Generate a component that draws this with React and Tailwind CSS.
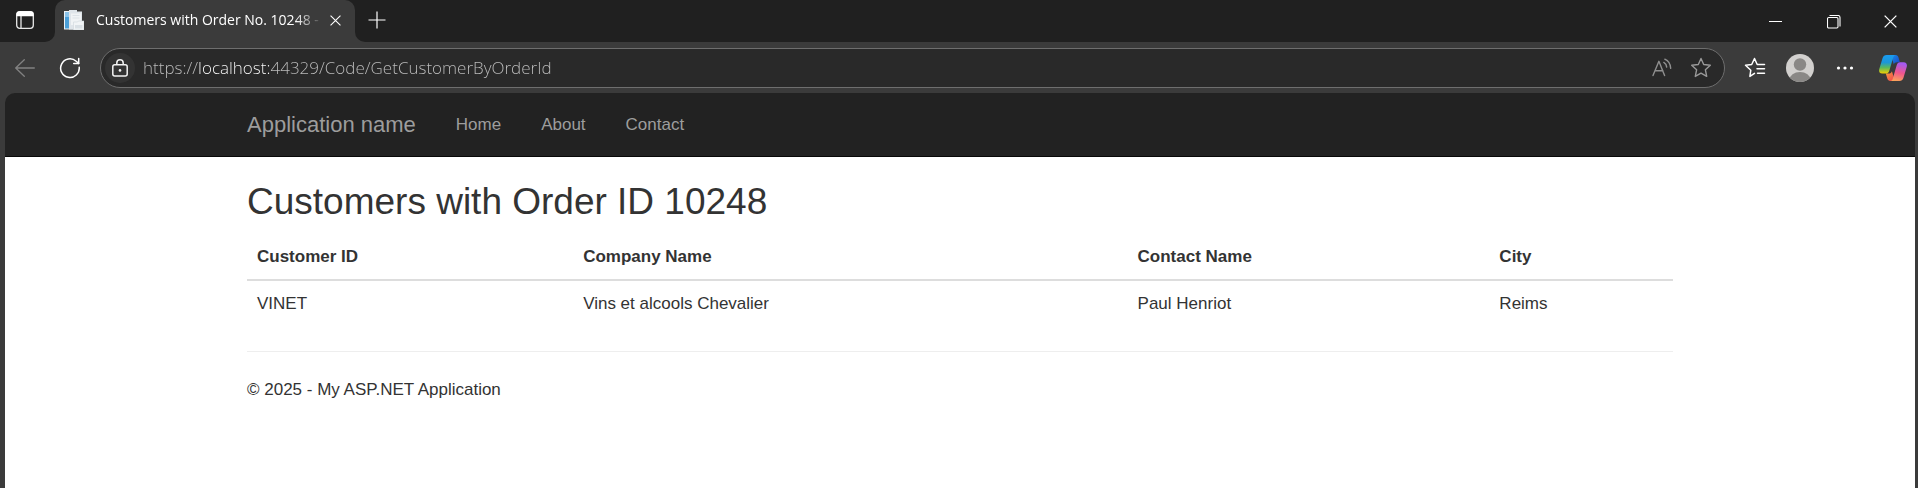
import React from "react";

const customers = [
  { id: "VINET", company: "Vins et alcools Chevalier", contact: "Paul Henriot", city: "Reims" },
];

function IconButton({ label, className, children }) {
  return (
    <button type="button" aria-label={label} className={`flex shrink-0 items-center justify-center ${className}`}>
      {children}
    </button>
  );
}

function TabActionsIcon() {
  return (
    <svg width="20" height="20" viewBox="0 0 20 20" fill="none" stroke="#e8e8e8" strokeWidth="1.3">
      <rect x="1.700" y="1.700" width="16.600" height="16.600" rx="3" />
      <path d="M2 5V4.5A2.5 2.5 0 0 1 4.5 2h11A2.5 2.5 0 0 1 18 4.500V5.500H2z" fill="#fff" stroke="#fff" />
      <path d="M6 6v12" />
    </svg>
  );
}

function Favicon() {
  return (
    <svg width="20" height="20" viewBox="0 0 20 20" className="shrink-0" aria-hidden="true">
      <rect x="0" y="1" width="12" height="18.500" fill="#eef2f5" />
      <rect x="1" y="2" width="4" height="16.500" fill="#4a9fd8" />
      <rect x="1" y="2" width="4" height="5" fill="#8cc4ea" />
      <path d="M5 0h8v1.500h5V19.500H5z" fill="#dfe5ea" />
      <path d="M7 3.500h10V15H7z" fill="#f0f3f5" />
      <path d="M8.500 5.500h7M8.500 8h7" stroke="#dde3e8" />
      <path d="M9.500 12h4l1-1H20v9H9.500z" fill="#f1f4f6" stroke="#cfd6dc" strokeWidth="0.6" />
      <path d="M11 15h7.500v3.500H11z" fill="#d9e0e5" />
    </svg>
  );
}

function CrossIcon({ size }) {
  return (
    <svg width={size} height={size} viewBox="0 0 14 14" fill="none" stroke="#fff" strokeWidth="1.4">
      <path d="M.7.7l12.600 12.600M13.300.7L.7 13.300" />
    </svg>
  );
}

function PlusIcon() {
  return (
    <svg width="18" height="18" viewBox="0 0 18 18" fill="none" stroke="#fff" strokeWidth="1.2">
      <path d="M9 .5v17M.5 9h17" />
    </svg>
  );
}

function MinimizeIcon() {
  return (
    <svg width="14" height="14" viewBox="0 0 14 14" fill="none" stroke="#fff">
      <path d="M0 6.500h13" />
    </svg>
  );
}

function RestoreIcon() {
  return (
    <svg width="14" height="14" viewBox="0 0 14 14" fill="none" stroke="#fff" strokeWidth="1.1">
      <rect x=".5" y="2.500" width="10.500" height="10.500" rx="1.2" />
      <path d="M2.500.5h8.500a2 2 0 0 1 2 2V11.500" />
    </svg>
  );
}

function BackIcon() {
  return (
    <svg width="20" height="18" viewBox="0 0 20 18" fill="none" stroke="#828282" strokeWidth="1.3" strokeLinecap="round" strokeLinejoin="round">
      <path d="M19.300 9H.7M9.300.7L.7 9l8.600 8.300" />
    </svg>
  );
}

function RefreshIcon() {
  return (
    <svg width="22" height="22" viewBox="0 0 22 22" fill="none" stroke="#fff" strokeWidth="1.5" strokeLinecap="round" strokeLinejoin="round">
      <path d="M20.200 10.200A9.300 9.300 0 1 1 17.200 4.300L19.600 6.400" />
      <path d="M19.700 1.600v5h-5" />
    </svg>
  );
}

function LockIcon() {
  return (
    <svg width="16" height="18" viewBox="0 0 16 18" fill="none" stroke="#f2f2f2" strokeWidth="1.5">
      <rect x=".8" y="5.800" width="14.400" height="11.200" rx="2" />
      <path d="M4.800 5.500V4a3.200 3.200 0 0 1 6.400 0v1.500" />
      <circle cx="8" cy="11.400" r="1.300" fill="#f2f2f2" stroke="none" />
    </svg>
  );
}

function ReadAloudIcon() {
  return (
    <svg width="20" height="20" viewBox="0 0 20 20" fill="none" stroke="#8f8f8f" strokeWidth="1.4" strokeLinecap="round" strokeLinejoin="round">
      <path d="M1 17.500L6.900 3.300 12.600 17.500M2.900 12.800h8" />
      <path d="M11.800 4.400c1.700 1 2.800 2.700 2.900 4.700" />
      <path d="M12.800 1.200c3.600 1.600 5.700 5 5.900 9.200" />
    </svg>
  );
}

const STAR = "M11 1.500l2.700 6 6.600.8-4.900 4.500 1.300 6.600L11 16.200l-5.700 3.200 1.300-6.600L1.700 8.300l6.600-.8z";

function StarIcon() {
  return (
    <svg width="22" height="22" viewBox="0 0 22 22" fill="none" stroke="#999" strokeWidth="1.4" strokeLinejoin="round">
      <path d={STAR} />
    </svg>
  );
}

function FavoritesIcon() {
  return (
    <svg width="22" height="22" viewBox="0 0 22 22" fill="none" stroke="#fff" strokeWidth="1.500" strokeLinecap="round" strokeLinejoin="round">
      <path d="M10.500 16.300L5.900 19.400 6.800 13.200 1.500 8.300l6.200-.8L10.500 1.500l2.700 6h7.300" />
      <path d="M13 11.800h7.500M13.500 16.200h7" />
    </svg>
  );
}

function AvatarIcon() {
  return (
    <svg width="28" height="28" viewBox="0 0 28 28">
      <defs>
        <clipPath id="avatar-clip">
          <circle cx="14" cy="14" r="14" />
        </clipPath>
      </defs>
      <g clipPath="url(#avatar-clip)">
        <rect width="28" height="28" fill="#d2d0ce" />
        <circle cx="14" cy="10.500" r="6.200" fill="#8a8886" />
        <ellipse cx="14" cy="26" rx="10.500" ry="8" fill="#8a8886" />
      </g>
    </svg>
  );
}

function DotsIcon() {
  return (
    <svg width="18" height="4" viewBox="0 0 18 4" fill="#fff">
      <circle cx="2.500" cy="2" r="1.600" />
      <circle cx="9" cy="2" r="1.600" />
      <circle cx="15.500" cy="2" r="1.600" />
    </svg>
  );
}

function CopilotIcon() {
  return (
    <svg width="28" height="26" viewBox="0 0 28 26">
      <defs>
        <linearGradient id="cp-left" x1="0" y1="0" x2="0" y2="1">
          <stop offset="0" stopColor="#1a9cf0" />
          <stop offset=".4" stopColor="#1c96d8" />
          <stop offset=".68" stopColor="#5cb95a" />
          <stop offset="1" stopColor="#f5d000" />
        </linearGradient>
        <linearGradient id="cp-right" x1=".3" y1="0" x2=".1" y2="1">
          <stop offset="0" stopColor="#a55af0" />
          <stop offset=".5" stopColor="#f0568c" />
          <stop offset="1" stopColor="#fbab55" />
        </linearGradient>
        <linearGradient id="cp-top" x1="0" y1="0" x2="1" y2="1">
          <stop offset="0" stopColor="#1790ea" />
          <stop offset="1" stopColor="#1c41c4" />
        </linearGradient>
        <linearGradient id="cp-bottom" x1="0" y1="0" x2="1" y2="1">
          <stop offset="0" stopColor="#f7a23c" />
          <stop offset="1" stopColor="#f03b50" />
        </linearGradient>
      </defs>
      <path d="M12 0h4.500c1.800 0 2.500 1 3 2.500l1.400 4.700h-2.800c-1.800 0-2.800.8-3.300 2.300z" fill="url(#cp-top)" />
      <path d="M16 26h-4.500c-1.800 0-2.700-.9-3.200-2.500L6.800 18.600h2.900c1.800 0 2.600-.8 3.200-2.300z" fill="url(#cp-bottom)" />
      <path d="M7.600 0h8.800c-1.200.3-1.800 1.300-2.200 2.600L10.300 15.800c-.6 1.900-1.600 2.800-3.400 2.800H3.300C.5 18.600-.4 16.500.3 14L3.600 3C4.200 1.100 5.600 0 7.600 0z" fill="url(#cp-left)" />
      <path d="M20.400 26h-8.800c1.200-.3 1.800-1.300 2.200-2.600L17.700 10.200c.6-1.900 1.600-3 3.400-3h3.600c2.800 0 3.700 2.300 3 4.800L24.400 23c-.6 1.900-2 3-4 3z" fill="url(#cp-right)" />
    </svg>
  );
}

function TabStrip() {
  return (
    <div className="flex h-[42px] bg-[#3b3b3b]">
      <div className="flex w-[55px] shrink-0 justify-center rounded-br-[10px] bg-[#202020] pr-[5px]">
        <IconButton label="Tab actions" className="h-10 w-8">
          <TabActionsIcon />
        </IconButton>
      </div>
      <div className="w-[300px] shrink-0 bg-[linear-gradient(#202020_50%,transparent_50%)]">
        <div className="flex h-full items-center rounded-t-[10px] bg-[#3b3b3b] pr-2 pb-[2px] pl-[9px]">
          <Favicon />
          <span className="ml-3 w-[227px] shrink-0 whitespace-nowrap font-['Open_Sans',sans-serif] text-[14px] leading-5 text-white [mask-image:linear-gradient(to_right,black_200px,transparent_227px)]">
            Customers with Order No. 10248 -
          </span>
          <IconButton label="Close tab" className="h-6 w-6">
            <CrossIcon size={11} />
          </IconButton>
        </div>
      </div>
      <div className="flex min-w-0 flex-1 justify-between rounded-bl-[10px] bg-[#202020]">
        <IconButton label="New tab" className="h-[39px] w-11">
          <PlusIcon />
        </IconButton>
        <div className="flex h-[43px]">
          <IconButton label="Minimize" className="w-[58px]">
            <MinimizeIcon />
          </IconButton>
          <IconButton label="Restore" className="w-[58px]">
            <RestoreIcon />
          </IconButton>
          <IconButton label="Close window" className="w-[55px]">
            <CrossIcon size={13} />
          </IconButton>
        </div>
      </div>
    </div>
  );
}

function Toolbar() {
  return (
    <div className="flex h-[51px] items-center bg-[#3b3b3b]">
      <IconButton label="Back" className="h-10 w-[50px]">
        <BackIcon />
      </IconButton>
      <IconButton label="Refresh" className="h-10 w-10">
        <RefreshIcon />
      </IconButton>
      <div className="ml-[10px] flex h-10 min-w-0 flex-1 items-center rounded-full border border-[#6e6e6e] bg-[#292929] pr-2 pl-1">
        <IconButton label="View site information" className="h-[30px] w-[30px] rounded-full bg-[#333333]">
          <LockIcon />
        </IconButton>
        <input
          type="text"
          aria-label="Address"
          defaultValue="https://localhost:44329/Code/GetCustomerByOrderId"
          className="ml-2 min-w-0 flex-1 bg-[linear-gradient(to_right,#c0c0c0_56px,#ffffff_56px,#ffffff_126px,#c0c0c0_126px)] bg-clip-text font-['Open_Sans',sans-serif] text-[17px] leading-6 font-light text-transparent outline-none"
        />
        <IconButton label="Read aloud" className="h-8 w-12">
          <ReadAloudIcon />
        </IconButton>
        <IconButton label="Add to favorites" className="h-8 w-[30px]">
          <StarIcon />
        </IconButton>
      </div>
      <div className="flex items-center pl-[7px]">
        <IconButton label="Favorites" className="h-10 w-[45px]">
          <FavoritesIcon />
        </IconButton>
        <IconButton label="Profile" className="h-10 w-[45px]">
          <AvatarIcon />
        </IconButton>
        <IconButton label="Settings and more" className="h-10 w-[45px]">
          <DotsIcon />
        </IconButton>
        <IconButton label="Copilot" className="h-10 w-[51px]">
          <CopilotIcon />
        </IconButton>
      </div>
    </div>
  );
}

function Navbar() {
  return (
    <nav className="rounded-t-[10px] border-b border-[#080808] bg-[#222222]">
      <div className="mx-auto flex h-[63px] max-w-[1464px] items-center px-[19px] text-[17px] leading-[25px] text-[#9d9d9d]">
        <a href="#" className="text-[22px]">
          Application name
        </a>
        <ul className="ml-5 flex">
          {["Home", "About", "Contact"].map((item) => (
            <li key={item}>
              <a href="#" className="block px-5">
                {item}
              </a>
            </li>
          ))}
        </ul>
      </div>
    </nav>
  );
}

function Page() {
  return (
    <div className="flex flex-1 flex-col font-['Liberation_Sans',Arial,sans-serif] text-[17px] leading-[25px] text-[#333333]">
      <Navbar />
      <div className="flex-1 bg-white">
        <main className="mx-auto max-w-[1464px] px-[19px] pt-6">
          <h2 className="text-[37px] leading-[41px]">Customers with Order ID 10248</h2>
          <table className="mt-3 w-full text-left">
            <thead>
              <tr className="border-b-2 border-[#dddddd]">
                <th className="p-[10px]">Customer ID</th>
                <th className="p-[10px]">Company Name</th>
                <th className="p-[10px]">Contact Name</th>
                <th className="p-[10px]">City</th>
              </tr>
            </thead>
            <tbody>
              {customers.map((c) => (
                <tr key={c.id}>
                  <td className="p-[10px]">{c.id}</td>
                  <td className="p-[10px]">{c.company}</td>
                  <td className="p-[10px]">{c.contact}</td>
                  <td className="p-[10px]">{c.city}</td>
                </tr>
              ))}
            </tbody>
          </table>
          <hr className="my-[25px] border-[#eeeeee]" />
          <footer>
            <p>© 2025 - My ASP.NET Application</p>
          </footer>
        </main>
      </div>
    </div>
  );
}

export default function App() {
  return (
    <div className="flex min-h-screen flex-col bg-[#3b3b3b]">
      <header>
        <TabStrip />
        <Toolbar />
      </header>
      <div className="flex flex-1 pr-[3px] pl-[5px]">
        <Page />
      </div>
    </div>
  );
}
